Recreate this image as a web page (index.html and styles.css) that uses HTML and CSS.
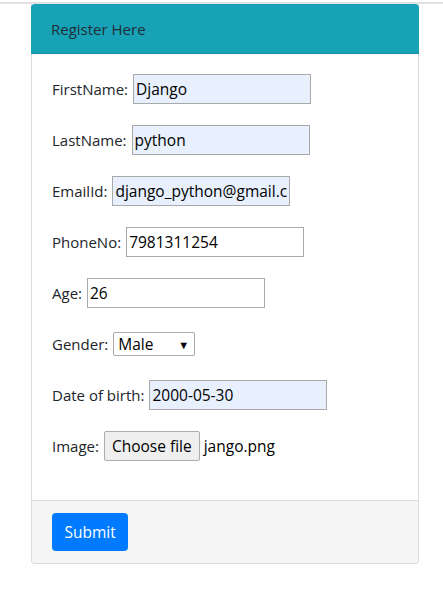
FILE: index.html
```html
<!DOCTYPE html>
<html>
<head>
<meta charset="utf-8">
<link rel="stylesheet" href="styles.css">
</head>
<body>
<div class="topline"></div>
<div class="card">
  <div class="card-header">Register Here</div>
  <form class="card-body">
    <div class="row"><label>FirstName:</label><input class="field filled" type="text" value="Django"></div>
    <div class="row"><label>LastName:</label><input class="field filled" type="text" value="python"></div>
    <div class="row"><label>EmailId:</label><input class="field filled" type="text" value="django_python@gmail.com"></div>
    <div class="row"><label>PhoneNo:</label><input class="field" type="text" value="7981311254"></div>
    <div class="row"><label>Age:</label><input class="field" type="text" value="26"></div>
    <div class="row"><label>Gender:</label>
      <div class="select"><span>Male</span><span class="arrow">▼</span></div>
    </div>
    <div class="row"><label>Date of birth:</label><input class="field filled" type="text" value="2000-05-30"></div>
    <div class="row"><label>Image:</label><button type="button" class="filebtn">Choose file</button><span class="filename">jango.png</span></div>
  </form>
  <div class="card-footer"><button type="button" class="btn">Submit</button></div>
</div>
</body>
</html>
```
FILE: styles.css
```css
html, body {
  margin: 0;
  padding: 0;
  background: #fff;
}
body {
  font-family: "Open Sans", "Noto Sans", sans-serif;
  color: #212529;
  font-size: 15px;
}
.topline {
  height: 2px;
  margin-top: 2px;
  background: #e2e2e2;
}
.card {
  margin: 0 0 0 31px;
  width: 388px;
  border: 1px solid #dcdcdc;
  border-top: none;
  border-radius: 0 0 4px 4px;
  box-sizing: border-box;
}
.card-header {
  background: #17a2b8;
  height: 50px;
  box-sizing: border-box;
  padding: 0 20px;
  display: flex;
  align-items: center;
  border-bottom: 1px solid #138d9f;
  margin: 0 -1px;
  border-radius: 4px 4px 0 0;
  font-size: 15px;
  color: #212f35;
}
.card-body {
  padding: 20px 20px 39px 20px;
  display: flex;
  flex-direction: column;
  gap: 21px;
  margin: 0;
}
.row {
  height: 30px;
  display: flex;
  align-items: center;
}
.row label {
  margin-right: 5px;
}
.field {
  width: 178px;
  height: 30px;
  box-sizing: border-box;
  border: 1px solid #a9a9a9;
  background: #fff;
  font-family: inherit;
  font-size: 15.5px;
  color: #000;
  padding: 0 2px;
  margin: 0;
  outline: none;
}
.field.filled {
  background: #e8f0fe;
}
.select {
  width: 82px;
  height: 24px;
  box-sizing: border-box;
  border: 1px solid #a9a9a9;
  border-radius: 2px;
  display: flex;
  align-items: center;
  justify-content: space-between;
  padding: 0 5px 0 4px;
  color: #000;
  font-size: 15.5px;
}
.select .arrow {
  font-size: 11px;
}
.filebtn {
  height: 30px;
  box-sizing: border-box;
  border: 1px solid #adadad;
  background: #efefef;
  border-radius: 2px;
  font-family: inherit;
  font-size: 15.5px;
  color: #000;
  padding: 0 7px;
  margin: 0 4px 0 0;
}
.filename {
  color: #000;
  font-size: 15.5px;
}
.card-footer {
  background: #f5f5f5;
  border-top: 1px solid #dcdcdc;
  padding: 12px 20px;
  border-radius: 0 0 4px 4px;
}
.btn {
  background: #007bff;
  color: #fff;
  border: none;
  border-radius: 4px;
  height: 38px;
  padding: 0 12.5px;
  font-family: inherit;
  font-size: 15.5px;
  display: block;
}
```
